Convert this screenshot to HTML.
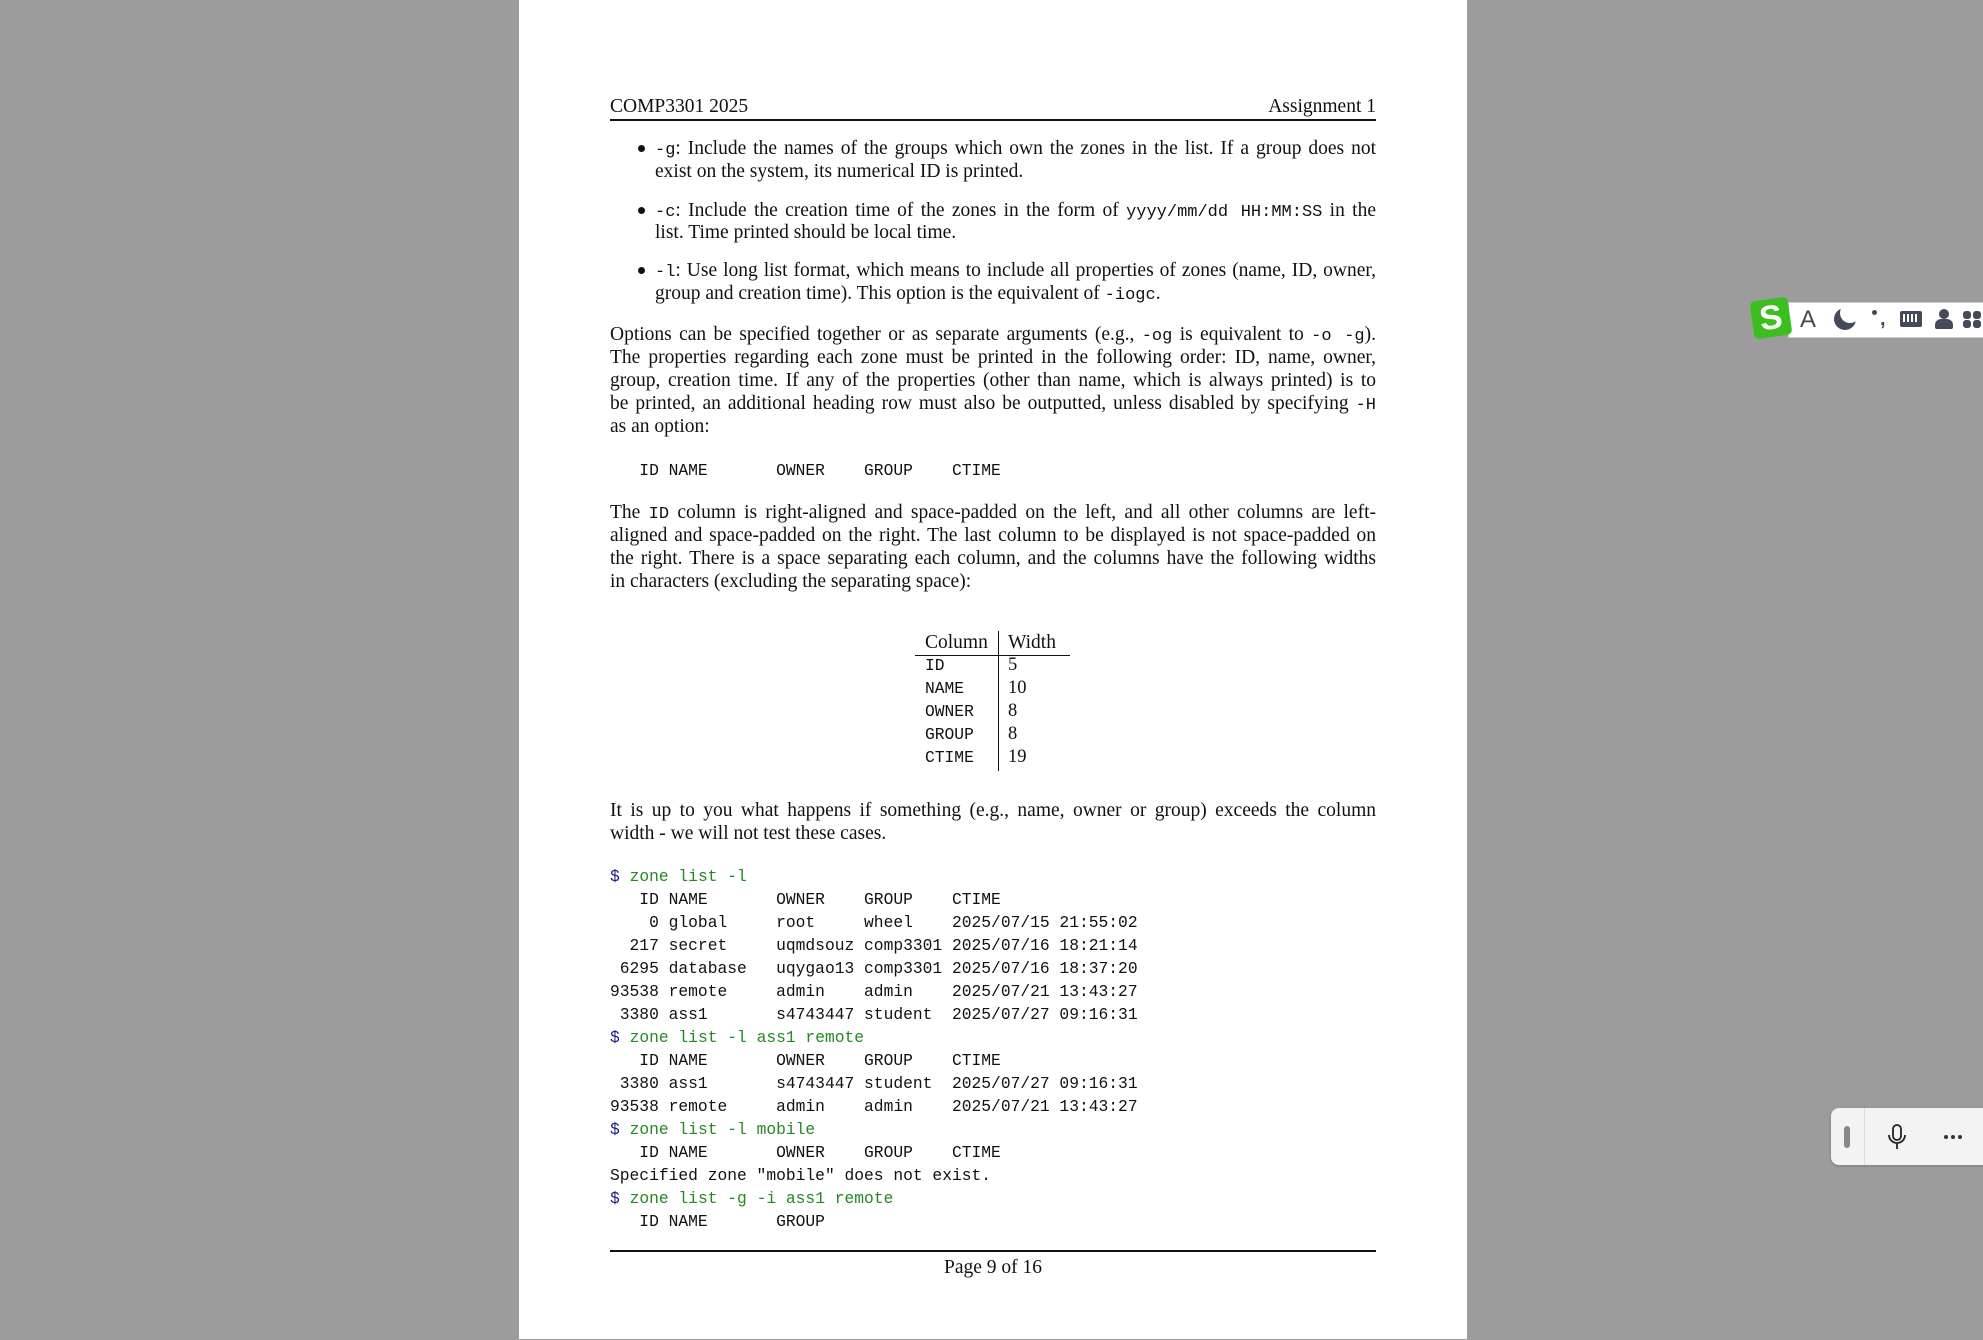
<!DOCTYPE html>
<html><head><meta charset="utf-8">
<style>
html,body{margin:0;padding:0;}
body{width:1983px;height:1339px;background:#9c9c9c;position:relative;overflow:hidden;font-family:"Liberation Serif",serif;color:#111;}
#w{position:absolute;left:0;top:1px;width:1983px;height:1339px;}
.page{position:absolute;left:519px;top:-1px;width:948px;height:1339px;background:#fff;}
.l{position:absolute;left:610px;width:766px;height:23px;line-height:23px;font-size:19.5px;white-space:nowrap;}
.j{text-align:justify;text-align-last:justify;}
.b{left:655px;width:721px;}
tt{font-family:"Liberation Mono",monospace;font-size:17px;}
.m{font-family:"Liberation Mono",monospace;font-size:16.3px;position:absolute;left:610px;height:23px;line-height:23px;white-space:pre;color:#111;}
.d{color:#1a1a8c;}
.g{color:#238a23;}
.dot{position:absolute;left:638px;width:7px;height:7px;border-radius:50%;background:#111;}
.rule{position:absolute;left:610px;width:766px;height:1.5px;background:#111;}
</style></head><body>
<div id="w">
<div class="page"></div>

<div class="l" style="top:94px">COMP3301 2025<span style="float:right">Assignment 1</span></div>
<div class="rule" style="top:118px"></div>

<div class="dot" style="top:144px"></div>
<div class="l b j" style="top:136px"><tt>-g</tt>: Include the names of the groups which own the zones in the list. If a group does not</div>
<div class="l b" style="top:159px">exist on the system, its numerical ID is printed.</div>

<div class="dot" style="top:206px"></div>
<div class="l b j" style="top:198px"><tt>-c</tt>: Include the creation time of the zones in the form of <tt>yyyy/mm/dd HH:MM:SS</tt> in the</div>
<div class="l b" style="top:220px">list. Time printed should be local time.</div>

<div class="dot" style="top:266px"></div>
<div class="l b j" style="top:258px"><tt>-l</tt>: Use long list format, which means to include all properties of zones (name, ID, owner,</div>
<div class="l b" style="top:281px">group and creation time). This option is the equivalent of <tt>-iogc</tt>.</div>

<div class="l j" style="top:322px">Options can be specified together or as separate arguments (e.g., <tt>-og</tt> is equivalent to <tt>-o -g</tt>).</div>
<div class="l j" style="top:345px">The properties regarding each zone must be printed in the following order: ID, name, owner,</div>
<div class="l j" style="top:368px">group, creation time. If any of the properties (other than name, which is always printed) is to</div>
<div class="l j" style="top:391px">be printed, an additional heading row must also be outputted, unless disabled by specifying <tt>-H</tt></div>
<div class="l" style="top:414px">as an option:</div>

<div class="m" style="top:458px">   ID NAME       OWNER    GROUP    CTIME</div>

<div class="l j" style="top:500px">The <tt>ID</tt> column is right-aligned and space-padded on the left, and all other columns are left-</div>
<div class="l j" style="top:523px">aligned and space-padded on the right. The last column to be displayed is not space-padded on</div>
<div class="l j" style="top:546px">the right. There is a space separating each column, and the columns have the following widths</div>
<div class="l" style="top:569px">in characters (excluding the separating space):</div>

<div class="l" style="top:630px;left:925px;width:80px">Column</div>
<div class="l" style="top:630px;left:1008px;width:80px">Width</div>
<div style="position:absolute;left:915px;top:654px;width:155px;height:1.3px;background:#111"></div>
<div style="position:absolute;left:998px;top:630px;width:1.3px;height:140px;background:#111"></div>
<div class="m" style="top:653px;left:925px">ID</div><div class="l" style="top:653px;left:1008px;width:60px;font-size:18.5px">5</div>
<div class="m" style="top:676px;left:925px">NAME</div><div class="l" style="top:676px;left:1008px;width:60px;font-size:18.5px">10</div>
<div class="m" style="top:699px;left:925px">OWNER</div><div class="l" style="top:699px;left:1008px;width:60px;font-size:18.5px">8</div>
<div class="m" style="top:722px;left:925px">GROUP</div><div class="l" style="top:722px;left:1008px;width:60px;font-size:18.5px">8</div>
<div class="m" style="top:745px;left:925px">CTIME</div><div class="l" style="top:745px;left:1008px;width:60px;font-size:18.5px">19</div>

<div class="l j" style="top:798px">It is up to you what happens if something (e.g., name, owner or group) exceeds the column</div>
<div class="l" style="top:821px">width - we will not test these cases.</div>

<div class="m" style="top:864px"><span class="d">$</span> <span class="g">zone list -l</span></div>
<div class="m" style="top:887px">   ID NAME       OWNER    GROUP    CTIME</div>
<div class="m" style="top:910px">    0 global     root     wheel    2025/07/15 21:55:02</div>
<div class="m" style="top:933px">  217 secret     uqmdsouz comp3301 2025/07/16 18:21:14</div>
<div class="m" style="top:956px"> 6295 database   uqygao13 comp3301 2025/07/16 18:37:20</div>
<div class="m" style="top:979px">93538 remote     admin    admin    2025/07/21 13:43:27</div>
<div class="m" style="top:1002px"> 3380 ass1       s4743447 student  2025/07/27 09:16:31</div>
<div class="m" style="top:1025px"><span class="d">$</span> <span class="g">zone list -l ass1 remote</span></div>
<div class="m" style="top:1048px">   ID NAME       OWNER    GROUP    CTIME</div>
<div class="m" style="top:1071px"> 3380 ass1       s4743447 student  2025/07/27 09:16:31</div>
<div class="m" style="top:1094px">93538 remote     admin    admin    2025/07/21 13:43:27</div>
<div class="m" style="top:1117px"><span class="d">$</span> <span class="g">zone list -l mobile</span></div>
<div class="m" style="top:1140px">   ID NAME       OWNER    GROUP    CTIME</div>
<div class="m" style="top:1163px">Specified zone "mobile" does not exist.</div>
<div class="m" style="top:1186px"><span class="d">$</span> <span class="g">zone list -g -i ass1 remote</span></div>
<div class="m" style="top:1209px">   ID NAME       GROUP</div>

<div class="rule" style="top:1249px"></div>
<div class="l" style="top:1255px;text-align:center">Page 9 of 16</div>
</div>

<!-- IME toolbar -->
<div style="position:absolute;left:1788px;top:302px;width:200px;height:34px;background:#fff;border:1px solid #c8ccd0;"></div>
<div style="position:absolute;left:1752px;top:299px;width:38px;height:38px;background:#3cbf1e;border-radius:5px;transform:rotate(-8deg);color:#fff;font:bold 34px/38px 'Liberation Sans',sans-serif;text-align:center;">S</div>
<div style="position:absolute;left:1800px;top:304px;font:24px/32px 'Liberation Sans',sans-serif;color:#444a5a">A</div>
<div style="position:absolute;left:1834px;top:308px;width:22px;height:22px;border-radius:50%;background:#444a5a;"></div>
<div style="position:absolute;left:1840px;top:303px;width:20px;height:20px;border-radius:50%;background:#fff;"></div>
<div style="position:absolute;left:1872px;top:310px;width:5px;height:5px;border-radius:50%;background:#444a5a"></div>
<div style="position:absolute;left:1880px;top:303px;font:bold 20px/32px 'Liberation Sans',sans-serif;color:#444a5a">,</div>
<div style="position:absolute;left:1900px;top:311px;width:22px;height:16px;border-radius:2px;background:#444a5a"></div>
<div style="position:absolute;left:1903px;top:314px;width:16px;height:8px;background:repeating-linear-gradient(90deg,#fff 0 2px,#444a5a 2px 4px)"></div>
<div style="position:absolute;left:1939px;top:309px;width:10px;height:10px;border-radius:50%;background:#444a5a"></div>
<div style="position:absolute;left:1935px;top:319px;width:18px;height:10px;border-radius:6px 6px 2px 2px;background:#444a5a"></div>
<div style="position:absolute;left:1963px;top:311px;width:8px;height:8px;border-radius:3px;background:#444a5a"></div>
<div style="position:absolute;left:1963px;top:320px;width:8px;height:8px;border-radius:3px;background:#444a5a"></div>
<div style="position:absolute;left:1973px;top:311px;width:8px;height:8px;border-radius:3px;background:#444a5a"></div>
<div style="position:absolute;left:1973px;top:320px;width:8px;height:8px;border-radius:3px;background:#444a5a"></div>

<!-- voice widget -->
<div style="position:absolute;left:1831px;top:1108px;width:160px;height:57px;background:#f3f3f3;border-radius:8px;box-shadow:0 1px 3px rgba(0,0,0,.2)"></div>
<div style="position:absolute;left:1864px;top:1108px;width:1px;height:57px;background:#dcdcdc"></div>
<div style="position:absolute;left:1844px;top:1126px;width:6px;height:22px;border-radius:3px;background:#888"></div>
<svg style="position:absolute;left:1886px;top:1124px" width="22" height="26" viewBox="0 0 22 26"><rect x="7" y="1" width="8" height="15" rx="4" fill="none" stroke="#222" stroke-width="1.8"/><path d="M3 11a8 8 0 0 0 16 0M11 19v6" fill="none" stroke="#222" stroke-width="1.8"/></svg>
<div style="position:absolute;left:1944px;top:1135px;width:4px;height:4px;border-radius:50%;background:#333;box-shadow:7px 0 #333,14px 0 #333"></div>
</body></html>
